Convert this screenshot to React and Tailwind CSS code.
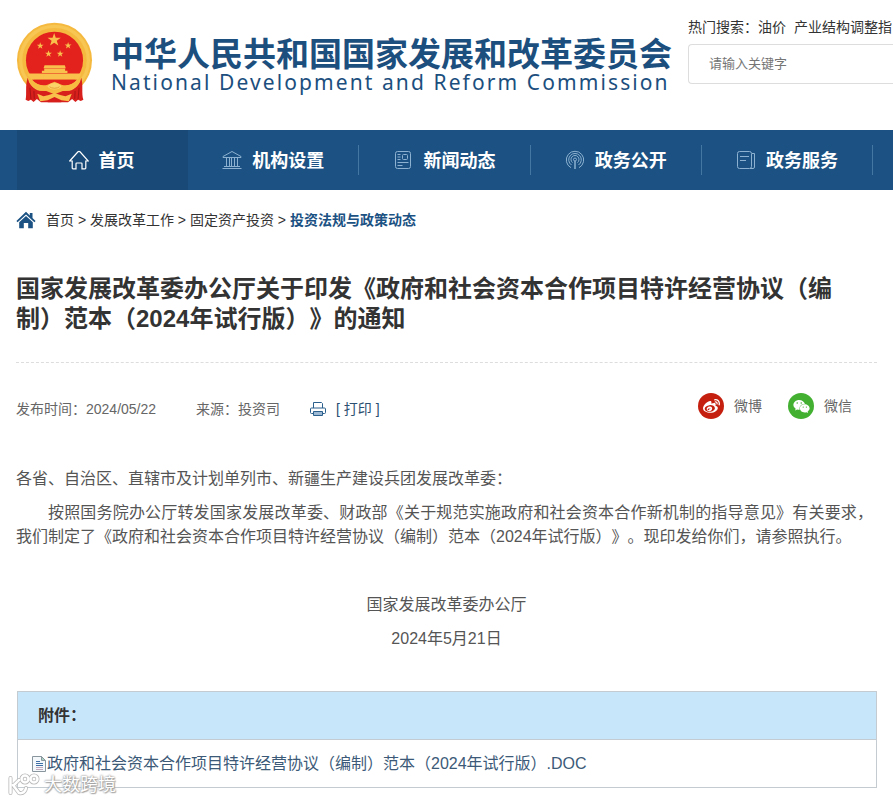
import React from 'react';
import { FaWeibo, FaWeixin } from 'react-icons/fa';

const NAV_ITEMS = [
  { label: '首页', icon: 'home', active: true },
  { label: '机构设置', icon: 'bank' },
  { label: '新闻动态', icon: 'news' },
  { label: '政务公开', icon: 'signal' },
  { label: '政务服务', icon: 'service' },
];

const CRUMBS = ['首页', '发展改革工作', '固定资产投资'];

const STAR = '0,-10 2.3,-3.1 9.5,-3.1 3.7,1.2 5.9,8.1 0,3.9 -5.9,8.1 -3.7,1.2 -9.5,-3.1 -2.3,-3.1';

const Emblem = () => (
  <svg viewBox="50 36 230 244" className="w-[77px] h-[81px] shrink-0" role="img" aria-label="国徽">
    <circle cx="165" cy="151" r="113" fill="#f5b93f" />
    <circle cx="165" cy="151" r="102" fill="none" stroke="#f8c653" strokeWidth="10" />
    <circle cx="165" cy="151" r="86" fill="#e3211d" />
    <g fill="#f9c04c">
      <polygon points={STAR} transform="translate(164 90) scale(2.1)" />
      <polygon points={STAR} transform="translate(122 108) scale(1.1)" />
      <polygon points={STAR} transform="translate(206 107) scale(1.1)" />
      <polygon points={STAR} transform="translate(147 132) scale(1.1)" />
      <polygon points={STAR} transform="translate(182 132) scale(1.1)" />
      <path d="M135 166 H196 L199 175 H132 Z" />
      <path d="M134 176 H197 V183 H204 V190 H127 V183 H134 Z" />
      <path d="M84 191 H246 C244 200 238 206 234 210 H96 C92 206 86 200 84 191 Z" />
    </g>
    <path d="M97 210 H233 C222 224 206 229 192 228 L165 216 L138 228 C124 229 108 224 97 210 Z" fill="#e3211d" />
    <path d="M84 204 C76 230 82 250 78 270 L86 274 L94 270 L102 277 L112 268 L124 278 H206 L218 268 L228 277 L236 270 L244 274 L252 270 C246 250 252 230 246 204 C240 226 226 240 210 243 H120 C104 240 90 226 84 204 Z" fill="#d71f1c" />
    <path d="M97 210 C110 224 126 229 142 226 L165 216 L188 226 C204 229 220 224 233 210 L243 214 C234 234 212 246 190 244 L165 254 L140 244 C118 246 96 234 87 214 Z" fill="#f7bb42" />
    <path d="M144 230 C152 216 178 216 186 230 C178 242 152 242 144 230 Z" fill="#fbd469" />
    <path d="M150 231 C156 237 174 237 180 231" stroke="#d9871f" strokeWidth="2" fill="none" />
    <path d="M91 234 L94 268 M103 244 L104 268 M239 234 L236 268 M227 244 L226 268" stroke="#a81414" strokeWidth="3" fill="none" />
    <path d="M113 252 L132 260 L148 256 L165 250 L182 256 L198 260 L217 252 L208 275 L186 272 L165 262 L144 272 L122 275 Z" fill="#f9c04c" />
    <path d="M144 278 L165 266 L186 278 Z" fill="#d71f1c" />
  </svg>
);

const NavIcon = ({ name }) => {
  const common = {
    viewBox: '0 0 20 20',
    fill: 'none',
    stroke: 'currentColor',
    strokeWidth: 1,
    'aria-hidden': true,
  };

  if (name === 'home') {
    return (
      <svg {...common} strokeWidth={1.2} className="size-5 text-white">
        <path d="M.7 11 9 1.8q1-.9 2 0L19.3 11h-2.5v7q0 .8-.8.8h-3v-5q0-.8-.8-.8H7.800q-.8 0-.8.8v5H4q-.8 0-.8-.8v-7Z" />
      </svg>
    );
  }
  if (name === 'bank') {
    return (
      <svg {...common} className="size-5 text-[#8db1d0]">
        <path d="M1 6.500 10 1.500l9 5v1H1ZM4.500 7.500v9M7.500 7.500v9M9.500 7.500v9M12.500 7.500v9M15.500 7.500v9M2 16.500h16M.5 18.500h19" />
      </svg>
    );
  }
  if (name === 'news') {
    return (
      <svg {...common} className="size-5 text-[#8db1d0]">
        <rect x="2.500" y="1.500" width="15" height="17" rx="2" />
        <rect x="9.500" y="4.500" width="5" height="5" rx="1" />
        <path d="M4.500 4.500h3M4.500 7h3M4.500 9.500h3M4.500 12.500h11M4.500 15.500h5" />
      </svg>
    );
  }
  if (name === 'signal') {
    return (
      <svg {...common} className="size-5 text-[#8db1d0]">
        <path d="M6 17.700A8.700 8.700 0 1 1 14 17.700M6.500 15A6.300 6.300 0 1 1 13.500 15M7.500 12.600A4 4 0 1 1 12.500 12.600" />
        <circle cx="10" cy="9.500" r="1.500" />
        <path d="M10 11v8" strokeWidth="1.500" />
      </svg>
    );
  }
  return (
    <svg {...common} className="size-5 text-[#8db1d0]">
      <rect x="1.500" y="1.500" width="14" height="17" rx="2" />
      <path d="M4 6.500h9M4 10.500h6M16 3.500h2.500V17q0 1.500-1.500 1.500h-3" />
    </svg>
  );
};

const HomeIcon = () => (
  <svg viewBox="0 0 20 18" className="w-5 h-[18px]" fill="#1b5283" aria-hidden="true">
    <path d="M10 .8 13.800 4.400V2h2.700v5l3.100 3-1.200 1.300L10 3.400l-8.400 7.900L.4 10Z" />
    <path d="M10 5 16.800 11.300V17.200h-4.600V12H7.800v5.200H3.200V11.300Z" />
  </svg>
);

const PrinterIcon = () => (
  <svg viewBox="0 0 16 16" className="size-4" fill="none" stroke="#2b5f8c" aria-hidden="true">
    <path d="M3.500 7V1.500h8l1 1V7" />
    <path d="M3.500 12.500h-2q-1 0-1-1V8q0-1 1-1h13q1 0 1 1v3.500q0 1-1 1h-2" />
    <path d="M3.500 10.500h9v4h-9Z" fill="#9db9d3" />
  </svg>
);

const DocIcon = () => (
  <svg viewBox="0 0 15 16" className="w-[15px] h-4 shrink-0" aria-hidden="true">
    <path d="M.5.5h9l4 4v11H.5Z" fill="#f4f8fb" stroke="#8a969e" />
    <path d="M9.500.5v4h4Z" fill="#a9d3c0" stroke="#8a969e" />
    <path d="M4 5.500h4M4 7.500h7M4 9.500h7" stroke="#3f6fa5" />
    <path d="M4 11.500h7M4 13.500h7" stroke="#c3a8bb" />
  </svg>
);

const Watermark = () => (
  <div className="absolute -left-2.5 -bottom-2.5 flex items-center gap-1 opacity-90">
    <svg viewBox="0 0 32 24" className="w-8 h-6" fill="none" strokeLinecap="round" aria-hidden="true">
      <g stroke="#b0b0b0" strokeWidth="4">
        <path d="M2.500 5v15M5 12l6 8q6 1 7-5M11 7 6 12" />
        <circle cx="17" cy="6" r="3.500" />
        <circle cx="26" cy="6" r="3.500" />
      </g>
      <g stroke="#fff" strokeWidth="2.500">
        <path d="M2.500 5v15M5 12l6 8q6 1 7-5M11 7 6 12" />
        <circle cx="17" cy="6" r="3.500" />
        <circle cx="26" cy="6" r="3.500" />
      </g>
    </svg>
    <span className="text-lg leading-6 text-white [text-shadow:0_0_2px_#888,0_0_2px_#999,1px_1px_1px_#aaa]">大数跨境</span>
  </div>
);

const Header = () => (
  <header className="flex items-start h-[130px] pl-4 overflow-hidden">
    <div className="flex items-start shrink-0 pt-[22px]">
      <Emblem />
      <div className="ml-[18px] mt-4 w-[577px] text-[#1c4f7e] whitespace-nowrap">
        <h1 className="text-[33px] leading-[34px] font-bold">中华人民共和国国家发展和改革委员会</h1>
        <p className="font-['Noto_Sans'] text-[21px] leading-5 tracking-widest">National Development and Reform Commission</p>
      </div>
    </div>
    <form className="flex-1 min-w-0 pt-[17px] text-sm leading-5 text-[#333]">
      <div className="whitespace-nowrap">
        <label htmlFor="keyword">热门搜索：</label>
        <a href="#oil">油价</a>
        <a href="#catalog" className="ml-2">产业结构调整指</a>
      </div>
      <input
        id="keyword"
        type="text"
        placeholder="请输入关键字"
        className="mt-[7px] h-10 w-full rounded-l border border-r-0 border-[#ddd] pl-5 pb-0.5 text-[13px] placeholder:text-[#757575]"
      />
    </form>
  </header>
);

const Nav = () => (
  <nav className="bg-[#1b5283] pl-[17px] pr-5">
    <ul className="grid grid-cols-5">
      {NAV_ITEMS.map((item) => (
        <li key={item.label} className={item.active ? 'bg-[#194a77]' : 'flex items-center'}>
          <a
            href="#nav"
            className={
              item.active
                ? 'flex h-[60px] w-full items-center justify-center gap-2.5 pr-0.5 text-lg font-bold text-white'
                : 'flex h-[30px] w-full items-center justify-center gap-2.5 border-r border-[#4478a3] text-lg font-bold text-white'
            }
          >
            <NavIcon name={item.icon} />
            <span className="pt-0.5">{item.label}</span>
          </a>
        </li>
      ))}
    </ul>
  </nav>
);

const Breadcrumb = () => (
  <div className="flex items-center gap-2.5 pt-5 text-sm leading-5 text-[#333]">
    <HomeIcon />
    <div>
      {CRUMBS.map((crumb) => (
        <React.Fragment key={crumb}>
          <a href="#crumb">{crumb}</a>
          {' > '}
        </React.Fragment>
      ))}
      <a href="#current" className="font-bold text-[#1b5283]">投资法规与政策动态</a>
    </div>
  </div>
);

const App = () => {
  return (
    <div className="bg-white font-['Liberation_Sans','Noto_Sans_CJK_SC',sans-serif] [text-spacing-trim:space-all]" lang="zh-CN">
      <Header />
      <Nav />
      <main className="px-4 pb-[13px]">
        <Breadcrumb />

        <h2 className="mt-11 border-b border-dashed border-[#ddd] pb-7 text-2xl leading-[30px] font-bold text-[#333]">
          国家发展改革委办公厅关于印发《政府和社会资本合作项目特许经营协议（编制）范本（2024年试行版）》的通知
        </h2>

        <div className="flex items-center justify-between pt-[30px] text-sm leading-5 text-[#666]">
          <div className="flex items-center pt-1.5">
            <span>发布时间：2024/05/22</span>
            <span className="ml-10">来源：投资司</span>
            <button type="button" className="ml-[30px] flex items-center gap-2.5 text-[#2b4f70]">
              <PrinterIcon />
              <span>[ 打印 ]</span>
            </button>
          </div>
          <div className="flex items-center gap-[26px] pr-[25px]">
            <a href="#weibo" className="flex items-center gap-2.5">
              <span className="flex size-[26px] items-center justify-center rounded-full bg-[#c5200f] text-white">
                <FaWeibo size={17} />
              </span>
              微博
            </a>
            <a href="#wechat" className="flex items-center gap-2.5">
              <span className="flex size-[26px] items-center justify-center rounded-full bg-[#43b031] text-white">
                <FaWeixin size={17} />
              </span>
              微信
            </a>
          </div>
        </div>

        <article className="mt-12 space-y-2.5 text-base leading-6 text-[#555]">
          <p>各省、自治区、直辖市及计划单列市、新疆生产建设兵团发展改革委：</p>
          <p className="indent-8 pr-1 text-justify">
            按照国务院办公厅转发国家发展改革委、财政部《关于规范实施政府和社会资本合作新机制的指导意见》有关要求，我们制定了《政府和社会资本合作项目特许经营协议（编制）范本（2024年试行版）》。现印发给你们，请参照执行。
          </p>
          <p className="pt-[34px] text-center">国家发展改革委办公厅</p>
          <p className="text-center">2024年5月21日</p>
        </article>

        <section className="relative mt-10 ml-px border border-[#c4ccd2]">
          <h3 className="h-12 border-b border-[#c4ccd2] bg-[#c8e6fa] pl-5 text-base leading-[47px] font-bold text-[#333]">附件：</h3>
          <a href="#doc" className="flex h-[47px] items-center pl-[14px] text-base text-[#3c5a78]">
            <DocIcon />
            政府和社会资本合作项目特许经营协议（编制）范本（2024年试行版）.DOC
          </a>
          <Watermark />
        </section>
      </main>
    </div>
  );
};

export default App;
